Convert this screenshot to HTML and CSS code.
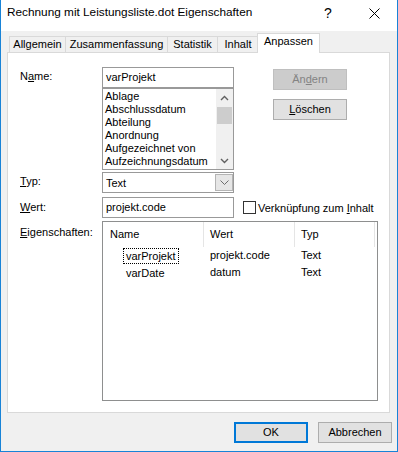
FILE: index.html
```html
<!DOCTYPE html>
<html lang="de">
<head>
    <meta charset="UTF-8">
    <title>Rechnung mit Leistungsliste.dot Eigenschaften</title>
    <link rel="stylesheet" href="styles.css">
</head>
<body>
    <div class="fenster">
        <!-- Titelleiste -->
        <div class="titelleiste">
            <div class="titel">Rechnung mit Leistungsliste.dot Eigenschaften</div>
            <div class="titel-knopf hilfe">?</div>
            <div class="titel-knopf">
                <svg width="11" height="11" viewBox="0 0 11 11"><path d="M0.5 0.5L10.5 10.5M10.5 0.5L0.5 10.5" stroke="#000" stroke-width="1" fill="none"/></svg>
            </div>
        </div>

        <!-- Reiter -->
        <div class="reiter">
            <div class="tab t1">Allgemein</div>
            <div class="tab t2">Zusammenfassung</div>
            <div class="tab t3">Statistik</div>
            <div class="tab t4">Inhalt</div>
            <div class="tab t5 aktiv">Anpassen</div>
        </div>

        <div class="seite">
            <div class="zeile-oben">
                <div class="beschriftung">N<u>a</u>me:</div>
                <div class="spalte-feld">
                    <div class="eingabe">varProjekt</div>
                    <div class="liste">
                        <div class="liste-eintraege">
                            <div>Ablage</div>
                            <div>Abschlussdatum</div>
                            <div>Abteilung</div>
                            <div>Anordnung</div>
                            <div>Aufgezeichnet von</div>
                            <div>Aufzeichnungsdatum</div>
                        </div>
                        <div class="scrollbar">
                            <div class="scroll-pfeil">
                                <svg width="9" height="6" viewBox="0 0 9 6"><path d="M1 5L4.5 1.5L8 5" fill="none" stroke="#606060" stroke-width="1.4"/></svg>
                            </div>
                            <div class="scroll-daumen"></div>
                            <div class="scroll-leer"></div>
                            <div class="scroll-pfeil">
                                <svg width="9" height="6" viewBox="0 0 9 6"><path d="M1 1L4.5 4.5L8 1" fill="none" stroke="#606060" stroke-width="1.4"/></svg>
                            </div>
                        </div>
                    </div>
                </div>
                <div class="knoepfe">
                    <div class="knopf deaktiviert">Än<u>d</u>ern</div>
                    <div class="knopf"><u>L</u>öschen</div>
                </div>
            </div>

            <div class="zeile zeile-typ">
                <div class="beschriftung"><u>T</u>yp:</div>
                <div class="auswahl">
                    <span class="auswahl-text">Text</span>
                    <span class="auswahl-knopf">
                        <svg width="9" height="5" viewBox="0 0 9 5"><path d="M0.5 0.5L4.5 4.5L8.5 0.5" fill="none" stroke="#6d6d6d" stroke-width="1"/></svg>
                    </span>
                </div>
            </div>

            <div class="zeile zeile-wert">
                <div class="beschriftung"><u>W</u>ert:</div>
                <div class="eingabe breit">projekt.code</div>
                <div class="kontrollkaestchen"></div>
                <div class="kontroll-text">Verknüpfung zum <u>I</u>nhalt</div>
            </div>

            <div class="zeile zeile-eigenschaften">
                <div class="beschriftung oben"><u>E</u>igenschaften:</div>
                <div class="listenansicht">
                    <div class="kopf">
                        <div class="sp1 kopf-zelle erste">Name</div>
                        <div class="sp2 kopf-zelle">Wert</div>
                        <div class="sp3 kopf-zelle">Typ</div>
                    </div>
                    <div class="eintrag">
                        <div class="sp1 name-zelle"><span class="fokus">varProjekt</span></div>
                        <div class="sp2 zelle">projekt.code</div>
                        <div class="sp3 zelle">Text</div>
                    </div>
                    <div class="eintrag">
                        <div class="sp1 name-zelle"><span class="ohne-fokus">varDate</span></div>
                        <div class="sp2 zelle">datum</div>
                        <div class="sp3 zelle">Text</div>
                    </div>
                </div>
            </div>
        </div>

        <!-- Fusszeile -->
        <div class="fuss">
            <div class="knopf standard">OK</div>
            <div class="knopf">Abbrechen</div>
        </div>
    </div>
</body>
</html>
```

FILE: styles.css
```css
* {
    box-sizing: border-box;
}
body {
    margin: 0;
    font-family: 'Liberation Sans', Arial, sans-serif;
    font-size: 11px;
    color: #000;
    background-color: #f0f0f0;
}
.fenster {
    width: 398px;
    height: 452px;
    border: 1px solid #1883d7;
    border-top: none;
    background-color: #f0f0f0;
    display: flex;
    flex-direction: column;
}
.titelleiste {
    height: 31px;
    background-color: #fff;
    display: flex;
    flex: none;
}
.titel {
    flex: 1;
    padding: 5px 0 0 6px;
    font-size: 11.8px;
    line-height: 15px;
}
.titel-knopf {
    width: 46px;
    height: 26px;
    display: flex;
    align-items: center;
    justify-content: center;
}
.hilfe {
    font-size: 14px;
}

/* Reiter */
.reiter {
    display: flex;
    align-items: flex-end;
    height: 19px;
    margin: 2px 0 0 8px;
    flex: none;
}
.tab {
    height: 16px;
    border: 1px solid #d9d9d9;
    border-bottom: none;
    margin-left: -1px;
    text-align: center;
    line-height: 14px;
    background-color: #f0f0f0;
}
.t1 { width: 57px; margin-left: 0; }
.t2 { width: 103px; }
.t3 { width: 51px; }
.t4 { width: 42px; }
.t5 { width: 63px; }
.tab.aktiv {
    height: 20px;
    margin: 0 0 -1px -2px;
    background-color: #fff;
    position: relative;
    z-index: 1;
    line-height: 15px;
}

/* Seite */
.seite {
    margin-left: 6px;
    width: 383px;
    height: 361px;
    flex: none;
    border: 1px solid #d9d9d9;
    background-color: #fff;
    padding: 14px 0 0 12px;
}
.zeile-oben,
.zeile {
    display: flex;
}
.beschriftung {
    width: 82px;
    flex: none;
    line-height: 19px;
}
.beschriftung.oben {
    padding-top: 4px;
    line-height: 15px;
}
.spalte-feld {
    width: 132px;
}
.eingabe {
    width: 132px;
    height: 21px;
    border: 1px solid #999;
    padding: 0 3px;
    line-height: 19px;
    flex: none;
}
.liste {
    height: 82px;
    border: 1px solid #999;
    display: flex;
}
.liste-eintraege {
    flex: 1;
    padding: 1px 0 0 2px;
    line-height: 13px;
    overflow: hidden;
    white-space: nowrap;
}
.scrollbar {
    width: 17px;
    background-color: #f0f0f0;
    display: flex;
    flex-direction: column;
}
.scroll-pfeil {
    height: 17px;
    display: flex;
    align-items: center;
    justify-content: center;
}
.scroll-daumen {
    height: 17px;
    margin: 1px 1px 0;
    background-color: #cdcdcd;
}
.scroll-leer {
    flex: 1;
}
.knoepfe {
    margin: 2px 0 0 39px;
    display: flex;
    flex-direction: column;
    gap: 9px;
}
.knopf {
    width: 74px;
    height: 21px;
    border: 1px solid #adadad;
    background-color: #e1e1e1;
    text-align: center;
    line-height: 19px;
}
.knopf.deaktiviert {
    background-color: #cccccc;
    border-color: #bfbfbf;
    color: #838383;
}
.knopf.standard {
    border: 2px solid #0078d7;
    line-height: 17px;
}

.zeile-typ {
    margin-top: 2px;
}
.auswahl {
    width: 132px;
    height: 21px;
    border: 1px solid #999;
    display: flex;
    align-items: center;
    padding: 0 0 0 3px;
}
.auswahl-text {
    flex: 1;
}
.auswahl-knopf {
    width: 18px;
    height: 17px;
    border: 1px solid #b4b4b4;
    background-color: #e6e6e6;
    display: flex;
    align-items: center;
    justify-content: center;
}
.zeile-wert {
    margin-top: 4px;
    align-items: center;
}
.kontrollkaestchen {
    width: 13px;
    height: 13px;
    margin-left: 9px;
    border: 1px solid #333;
    background-color: #fff;
}
.kontroll-text {
    margin-left: 2px;
}
.zeile-eigenschaften {
    margin-top: 3px;
}

/* Listenansicht */
.listenansicht {
    width: 276px;
    height: 180px;
    border: 1px solid #8e8f8f;
}
.kopf,
.eintrag {
    display: flex;
}
.kopf {
    height: 25px;
    line-height: 25px;
}
.sp1 { width: 101px; }
.sp2 { width: 91px; }
.sp3 { width: 80px; }
.kopf-zelle {
    border-right: 1px solid #e5e5e5;
    padding-left: 6px;
}
.kopf-zelle.erste {
    padding-left: 7px;
}
.eintrag {
    height: 17px;
}
.name-zelle {
    padding: 1px 0 0 20px;
}
.fokus,
.ohne-fokus {
    display: inline-block;
    line-height: 14px;
    padding: 0 2px;
    border: 1px dotted transparent;
}
.fokus {
    border-color: #000;
}
.zelle {
    padding-left: 6px;
    line-height: 17px;
}

/* Fusszeile */
.fuss {
    display: flex;
    justify-content: flex-end;
    gap: 10px;
    padding: 9px 5px 0 0;
}
```
